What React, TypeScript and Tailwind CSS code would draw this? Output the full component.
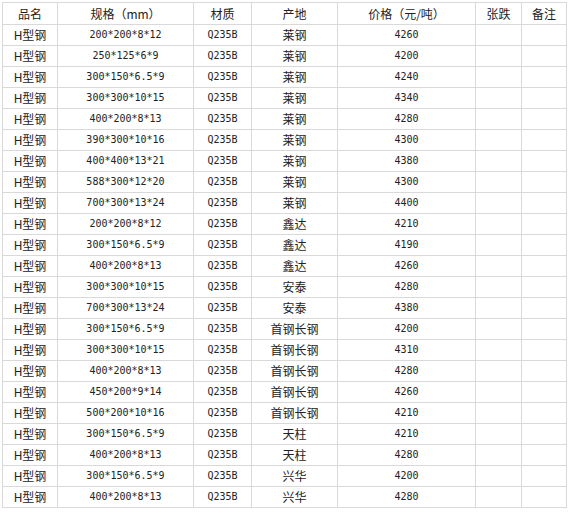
import React from 'react';

type Row = { spec: string; origin: string; price: string };

const rows: Row[] = [
  { spec: '200*200*8*12', origin: '莱钢', price: '4260' },
  { spec: '250*125*6*9', origin: '莱钢', price: '4200' },
  { spec: '300*150*6.5*9', origin: '莱钢', price: '4240' },
  { spec: '300*300*10*15', origin: '莱钢', price: '4340' },
  { spec: '400*200*8*13', origin: '莱钢', price: '4280' },
  { spec: '390*300*10*16', origin: '莱钢', price: '4300' },
  { spec: '400*400*13*21', origin: '莱钢', price: '4380' },
  { spec: '588*300*12*20', origin: '莱钢', price: '4300' },
  { spec: '700*300*13*24', origin: '莱钢', price: '4400' },
  { spec: '200*200*8*12', origin: '鑫达', price: '4210' },
  { spec: '300*150*6.5*9', origin: '鑫达', price: '4190' },
  { spec: '400*200*8*13', origin: '鑫达', price: '4260' },
  { spec: '300*300*10*15', origin: '安泰', price: '4280' },
  { spec: '700*300*13*24', origin: '安泰', price: '4380' },
  { spec: '300*150*6.5*9', origin: '首钢长钢', price: '4200' },
  { spec: '300*300*10*15', origin: '首钢长钢', price: '4310' },
  { spec: '400*200*8*13', origin: '首钢长钢', price: '4280' },
  { spec: '450*200*9*14', origin: '首钢长钢', price: '4260' },
  { spec: '500*200*10*16', origin: '首钢长钢', price: '4210' },
  { spec: '300*150*6.5*9', origin: '天柱', price: '4210' },
  { spec: '400*200*8*13', origin: '天柱', price: '4280' },
  { spec: '300*150*6.5*9', origin: '兴华', price: '4200' },
  { spec: '400*200*8*13', origin: '兴华', price: '4280' },
];

const cell = 'border border-[#d9d9d9] p-0 text-center align-middle';
const mono = "font-['DejaVu_Sans_Mono','Noto_Sans_CJK_SC',monospace] text-[10px]";

export default function App() {
  return (
    <div className="bg-white p-[2px] font-['Noto_Sans_CJK_SC',sans-serif] text-[12px] text-[#222]">
      <table className="border-collapse table-fixed w-[565px]">
        <colgroup>
          <col className="w-[55px]" />
          <col className="w-[136px]" />
          <col className="w-[58px]" />
          <col className="w-[86px]" />
          <col className="w-[138px]" />
          <col className="w-[46px]" />
          <col className="w-[45px]" />
        </colgroup>
        <thead>
          <tr className="h-[22px] leading-none">
            <th className={`${cell} font-normal`}>品名</th>
            <th className={`${cell} font-normal`}>规格（mm）</th>
            <th className={`${cell} font-normal`}>材质</th>
            <th className={`${cell} font-normal`}>产地</th>
            <th className={`${cell} font-normal`}>价格（元/吨）</th>
            <th className={`${cell} font-normal`}>张跌</th>
            <th className={`${cell} font-normal`}>备注</th>
          </tr>
        </thead>
        <tbody>
          {rows.map((r, i) => (
            <tr key={i} className="h-[21px] leading-none">
              <td className={cell}>H型钢</td>
              <td className={`${cell} ${mono}`}>{r.spec}</td>
              <td className={`${cell} ${mono}`}>Q235B</td>
              <td className={cell}>{r.origin}</td>
              <td className={`${cell} ${mono}`}>{r.price}</td>
              <td className={cell}></td>
              <td className={cell}></td>
            </tr>
          ))}
        </tbody>
      </table>
    </div>
  );
}
